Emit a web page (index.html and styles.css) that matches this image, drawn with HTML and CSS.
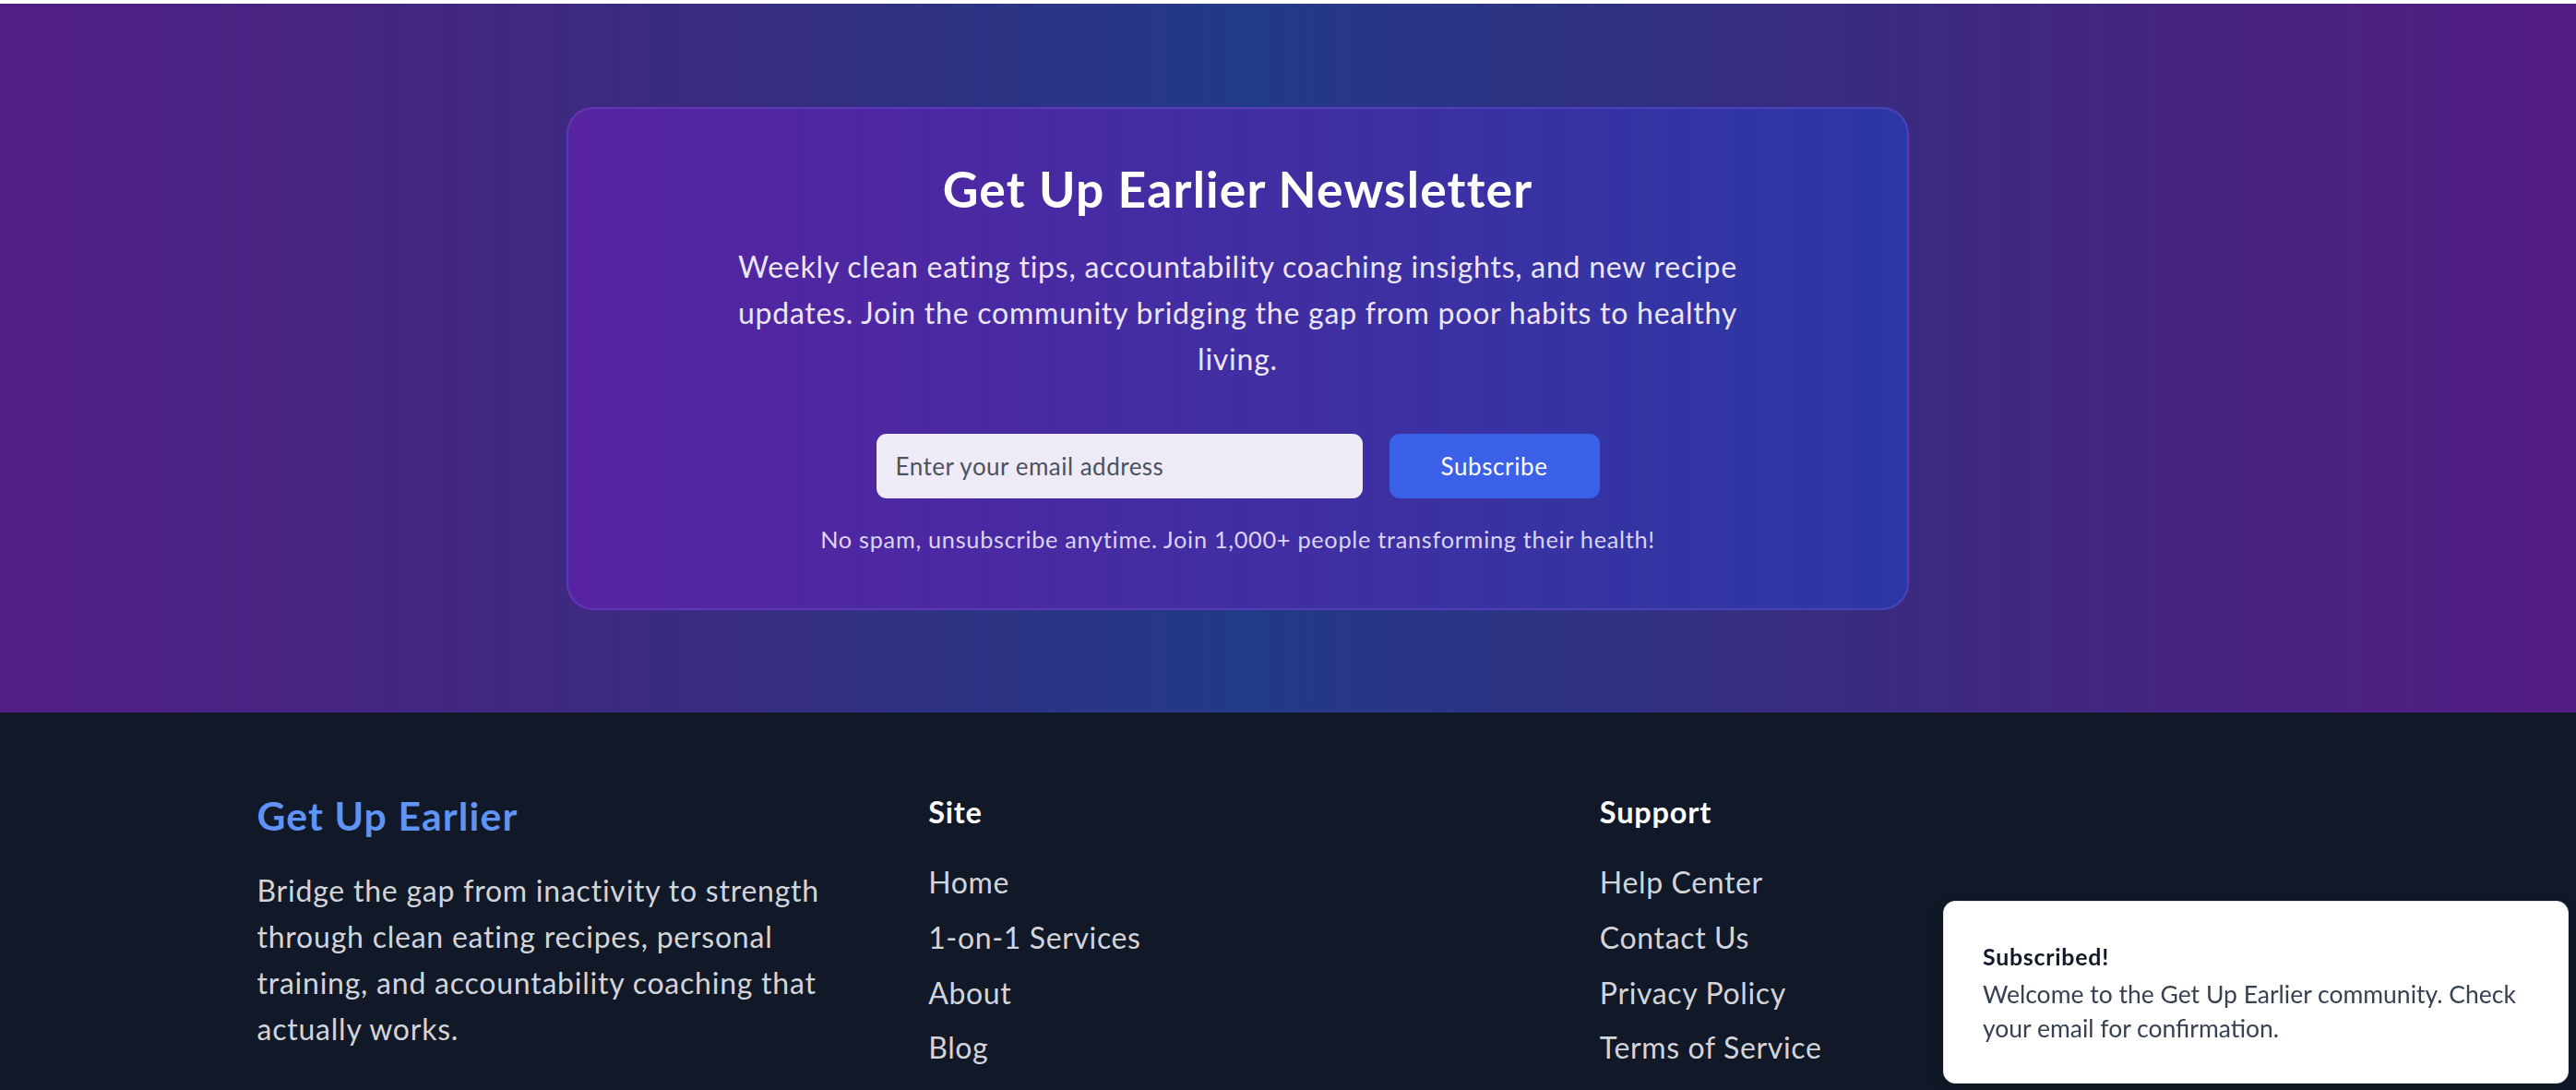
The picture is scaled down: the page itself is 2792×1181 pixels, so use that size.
FILE: index.html
```html
<!DOCTYPE html>
<html lang="en">
<head>
<meta charset="utf-8">
<title>Get Up Earlier Newsletter</title>
<link rel="stylesheet" href="styles.css">
</head>
<body>
<div class="top-strip"></div>
<section class="newsletter">
  <div class="frame">
    <div class="card">
      <h2 class="card-title">Get Up Earlier Newsletter</h2>
      <p class="card-lead">Weekly clean eating tips, accountability coaching insights, and new recipe updates. Join the community bridging the gap from poor habits to healthy living.</p>
      <form class="signup">
        <input class="signup-input" type="email" placeholder="Enter your email address">
        <button class="signup-button" type="button">Subscribe</button>
      </form>
      <p class="card-fine">No spam, unsubscribe anytime. Join 1,000+ people transforming their health!</p>
    </div>
  </div>
</section>
<footer class="site-footer">
  <div class="frame">
    <div class="footer-grid">
      <div class="footer-col">
        <h3 class="brand">Get Up Earlier</h3>
        <p class="brand-desc">Bridge the gap from inactivity to strength through clean eating recipes, personal training, and accountability coaching that actually works.</p>
      </div>
      <div class="footer-col">
        <h4 class="col-title">Site</h4>
        <ul class="links">
          <li><a href="#">Home</a></li>
          <li><a href="#">1-on-1 Services</a></li>
          <li><a href="#">About</a></li>
          <li><a href="#">Blog</a></li>
        </ul>
      </div>
      <div class="footer-col">
        <h4 class="col-title">Support</h4>
        <ul class="links">
          <li><a href="#">Help Center</a></li>
          <li><a href="#">Contact Us</a></li>
          <li><a href="#">Privacy Policy</a></li>
          <li><a href="#">Terms of Service</a></li>
        </ul>
      </div>
    </div>
  </div>
</footer>
<div class="toast" role="status">
  <div class="toast-title">Subscribed!</div>
  <div class="toast-body">Welcome to the Get Up Earlier community. Check your email for confirmation.</div>
</div>
</body>
</html>
```
FILE: styles.css
```css
html, body {
  margin: 0;
  padding: 0;
}
body {
  background: #111827;
  font-family: Lato, "Liberation Sans", Arial, sans-serif;
  overflow: hidden;
}
* { box-sizing: border-box; }

.top-strip {
  height: 4px;
  background: #ffffff;
}

.frame {
  width: 2683px;
}

.newsletter {
  background: linear-gradient(to right, #521f85 0%, #3a2b80 26%, #223a87 48.4%, #3a2b80 72%, #531d83 100%);
  padding: 112px 0 111px;
}

.card {
  width: 1455px;
  margin: 0 auto;
  padding: 54px 57px 56.5px;
  border-radius: 29px;
  border: 2px solid rgba(125, 90, 230, 0.35);
  background: linear-gradient(to right, #5723a1, #2c38a4);
  text-align: center;
  color: #ffffff;
}

.card-title {
  margin: 0 0 28px;
  font-size: 53.4px;
  line-height: 64px;
  font-weight: 700;
  letter-spacing: 0.022em;
}

.card-lead {
  max-width: 1150px;
  margin: 0 auto 57px;
  font-size: 32px;
  line-height: 49.8px;
  letter-spacing: 0.024em;
  color: #ece6f8;
}

.signup {
  display: flex;
  justify-content: center;
  gap: 29px;
  margin: 0;
}

.signup-input {
  width: 527px;
  height: 70px;
  border: 0;
  border-radius: 11px;
  background: #eeebf6;
  padding: 0 21px;
  font-family: inherit;
  font-size: 26px;
  letter-spacing: 0.019em;
  color: #1f2937;
  outline: none;
}
.signup-input::placeholder {
  color: #4b5262;
  opacity: 1;
}

.signup-button {
  width: 228px;
  height: 70px;
  border: 0;
  border-radius: 11px;
  background: #3a61e7;
  color: #ffffff;
  font-family: inherit;
  font-size: 26px;
  letter-spacing: 0.024em;
  font-weight: 400;
  cursor: pointer;
}

.card-fine {
  margin: 27px 0 0;
  font-size: 25.3px;
  line-height: 35.6px;
  letter-spacing: 0.028em;
  color: #dcd4f6;
}

.site-footer {
  background: #111827;
  padding: 83px 0 22px;
}

.footer-grid {
  width: 2126px;
  margin: 0 auto;
  display: grid;
  grid-template-columns: repeat(3, 1fr);
  gap: 57px;
}

.brand {
  margin: 0 0 28px;
  font-size: 42.7px;
  line-height: 57px;
  font-weight: 700;
  letter-spacing: 0.026em;
  color: #5f93f5;
}

.brand-desc {
  margin: 0;
  font-size: 32px;
  line-height: 50px;
  letter-spacing: 0.024em;
  color: #d1d5db;
}

.col-title {
  margin: 0 0 26px;
  font-size: 32.5px;
  line-height: 50px;
  font-weight: 700;
  letter-spacing: 0.025em;
  color: #ffffff;
}

.links {
  list-style: none;
  margin: 0;
  padding: 0;
  display: flex;
  flex-direction: column;
  gap: 9.6px;
}
.links li {
  font-size: 32px;
  line-height: 50px;
  letter-spacing: 0.02em;
}
.links a {
  color: #d1d5db;
  text-decoration: none;
}

.toast {
  position: fixed;
  right: 8px;
  bottom: 7px;
  width: 678px;
  padding: 42px 40px 40px 42px;
  background: #ffffff;
  border: 1px solid #e5e7eb;
  border-radius: 13px;
  box-shadow: 0 6px 20px rgba(0, 0, 0, 0.12);
}
.toast-title {
  font-size: 24.9px;
  line-height: 35.6px;
  font-weight: 700;
  letter-spacing: 0.03em;
  color: #111827;
}
.toast-body {
  margin-top: 4px;
  font-size: 26.5px;
  line-height: 37px;
  letter-spacing: 0;
  color: #374151;
}
```
